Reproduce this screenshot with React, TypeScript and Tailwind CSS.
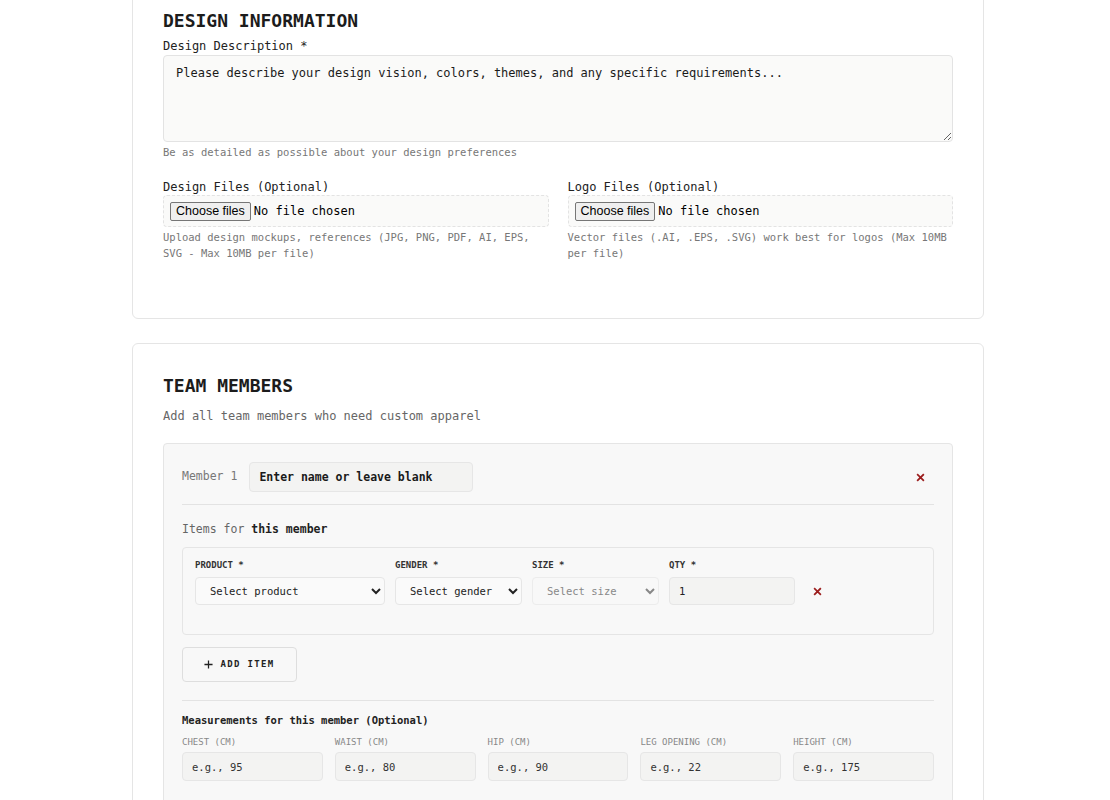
const mono = "font-['DejaVu_Sans_Mono','Liberation_Mono',monospace]";

const XIcon = ({ className = '' }: { className?: string }) => (
  <svg className={className} viewBox="0 0 10 10" fill="none" stroke="currentColor" strokeWidth="2" strokeLinecap="square">
    <path d="M2 2l6 6M8 2l-6 6" />
  </svg>
);

const measurements = [
  { label: 'CHEST (CM)', ph: 'e.g., 95' },
  { label: 'WAIST (CM)', ph: 'e.g., 80' },
  { label: 'HIP (CM)', ph: 'e.g., 90' },
  { label: 'LEG OPENING (CM)', ph: 'e.g., 22' },
  { label: 'HEIGHT (CM)', ph: 'e.g., 175' },
];

const FileField = ({ label, help }: { label: string; help: string }) => (
  <div>
    <label className="block text-[12px] leading-4 text-[#222]">{label}</label>
    <div className="flex h-8 items-center rounded-sm border border-dashed border-[#e3e3e3] bg-[#fafaf9] px-[6px]">
      <label className="flex cursor-pointer items-center">
        <input type="file" multiple className="hidden" />
        <span className="flex h-[19px] items-center rounded-[2px] border border-[#767676] bg-[#efefef] px-[5px] font-['Liberation_Sans',Arial,sans-serif] text-[12.5px] text-black">
          Choose files
        </span>
        <span className="ml-[3px] text-[12px] text-black">No file chosen</span>
      </label>
    </div>
    <p className="mt-[2px] text-[10.5px] leading-4 text-[#777]">{help}</p>
  </div>
);

const App = () => {
  return (
    <div className={`min-h-screen w-full bg-white text-[#1f1f1f] ${mono} overflow-hidden`}>
      {/* Design information */}
      <section className="ml-[132px] mt-[-24px] w-[852px] rounded-md border border-[#e5e5e5] bg-white px-[30px] pt-[30px] pb-[57px]">
        <h2 className="text-[18px] leading-[28px] font-bold text-[#1c1c1c]">DESIGN INFORMATION</h2>
        <label className="mt-[3px] block text-[12px] leading-4 text-[#222]">Design Description *</label>
        <textarea
          className="mt-px block h-[87px] w-full resize-y rounded-sm border border-[#e3e3e3] bg-[#fafaf9] px-3 pt-[9px] text-[12px] leading-4 placeholder:text-[#1a1a1a] focus:outline-none"
          placeholder="Please describe your design vision, colors, themes, and any specific requirements..."
        />
        <p className="mt-[2px] text-[10.5px] leading-4 text-[#777]">Be as detailed as possible about your design preferences</p>

        <div className="mt-[19px] grid grid-cols-2 gap-[19px]">
          <FileField
            label="Design Files (Optional)"
            help="Upload design mockups, references (JPG, PNG, PDF, AI, EPS, SVG - Max 10MB per file)"
          />
          <FileField
            label="Logo Files (Optional)"
            help="Vector files (.AI, .EPS, .SVG) work best for logos (Max 10MB per file)"
          />
        </div>
      </section>

      {/* Team members */}
      <section className="ml-[132px] mt-6 w-[852px] rounded-md border border-[#e5e5e5] bg-white px-[30px] pt-[28px] pb-[40px]">
        <h2 className="text-[18px] leading-[28px] font-bold text-[#1c1c1c]">TEAM MEMBERS</h2>
        <p className="mt-2 text-[12px] leading-4 text-[#666]">Add all team members who need custom apparel</p>

        <div className="mt-[19px] rounded-sm border border-[#e5e5e5] bg-[#f8f8f8] p-[18px]">
          <div className="flex items-center border-b border-[#e3e3e3] pb-3">
            <span className="text-[11.5px] text-[#777]">Member 1</span>
            <input
              className="ml-3 h-[30px] w-[224px] rounded-sm border border-[#e6e6e6] bg-[#f3f3f2] px-[9px] text-[11.5px] font-bold placeholder:text-[#1a1a1a] focus:outline-none"
              placeholder="Enter name or leave blank"
            />
            <button className="ml-auto mr-[9px] text-[#9b1c1c]">
              <XIcon className="h-[9px] w-[9px]" />
            </button>
          </div>

          <p className="mt-4 text-[11.5px] leading-4 text-[#666]">
            Items for <span className="font-bold text-[#1f1f1f]">this member</span>
          </p>

          <div className="mt-[10px] rounded-sm border border-[#e5e5e5] bg-[#f8f8f8] px-3 pt-[11px] pb-[29px]">
            <div className="grid grid-cols-[190px_127px_127px_126px_auto] items-end gap-x-[10px]">
              <div>
                <label className="block text-[9px] leading-3 font-bold text-[#333]">PRODUCT *</label>
                <select className="mt-[6px] h-[28px] w-full rounded-sm border border-[#e6e6e6] bg-[#fafafa] px-[10px] text-[10.5px] text-[#222]">
                  <option>Select product</option>
                </select>
              </div>
              <div>
                <label className="block text-[9px] leading-3 font-bold text-[#333]">GENDER *</label>
                <select className="mt-[6px] h-[28px] w-full rounded-sm border border-[#e6e6e6] bg-[#fafafa] px-[10px] text-[10.5px] text-[#222]">
                  <option>Select gender</option>
                </select>
              </div>
              <div>
                <label className="block text-[9px] leading-3 font-bold text-[#333]">SIZE *</label>
                <select disabled className="mt-[6px] h-[28px] w-full rounded-sm border border-[#ececec] bg-[#f8f8f8] px-[10px] text-[10.5px] text-[#888]">
                  <option>Select size</option>
                </select>
              </div>
              <div>
                <label className="block text-[9px] leading-3 font-bold text-[#333]">QTY *</label>
                <input
                  defaultValue="1"
                  className="mt-[6px] h-[28px] w-full rounded-sm border border-[#e6e6e6] bg-[#f3f3f2] px-[9px] text-[10.5px] text-[#222] focus:outline-none"
                />
              </div>
              <button className="mb-[9px] ml-[8px] text-[#9b1c1c]">
                <XIcon className="h-[9px] w-[9px]" />
              </button>
            </div>
          </div>

          <button className="mt-3 flex h-[35px] w-[115px] items-center justify-center gap-[7px] rounded-sm border border-[#dedede] bg-[#f8f8f8] text-[9px] font-bold tracking-[0.15em] text-[#222]">
            <svg className="h-[9px] w-[9px]" viewBox="0 0 10 10" fill="none" stroke="currentColor" strokeWidth="1.4">
              <path d="M5 0.5v9M0.5 5h9" />
            </svg>
            ADD ITEM
          </button>

          <div className="mt-[18px] border-t border-[#e3e3e3] pt-[11px]">
            <p className="text-[10.5px] leading-4 font-bold text-[#222]">Measurements for this member (Optional)</p>
            <div className="mt-2 grid grid-cols-5 gap-x-3">
              {measurements.map((m) => (
                <div key={m.label}>
                  <label className="block text-[9px] leading-3 text-[#888]">{m.label}</label>
                  <input
                    className="mt-[4px] h-[29px] w-full rounded-sm border border-[#e6e6e6] bg-[#f3f3f2] px-[9px] text-[10.5px] placeholder:text-[#333] focus:outline-none"
                    placeholder={m.ph}
                  />
                </div>
              ))}
            </div>
          </div>
          <div className="h-10" />
        </div>
      </section>
    </div>
  );
};

export default App;
